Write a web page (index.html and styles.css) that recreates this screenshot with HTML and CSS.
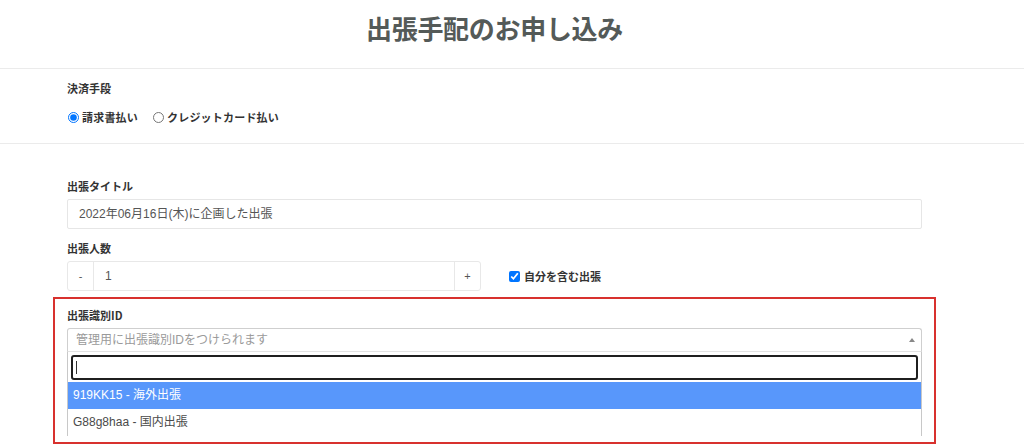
FILE: index.html
```html
<!DOCTYPE html>
<html lang="ja">
<head>
<meta charset="utf-8">
<title>出張手配のお申し込み</title>
<link rel="stylesheet" href="styles.css">
</head>
<body>
<header class="page-head">
  <div class="wrap">
    <h1 class="title">出張手配のお申し込み</h1>
  </div>
</header>

<section class="block pay">
  <div class="wrap">
    <div class="label">決済手段</div>
    <div class="radios">
      <label class="choice"><input type="radio" name="pay" checked><span>請求書払い</span></label>
      <label class="choice"><input type="radio" name="pay"><span>クレジットカード払い</span></label>
    </div>
  </div>
</section>

<section class="block main">
  <div class="wrap">
    <div class="label">出張タイトル</div>
    <div class="text-input">2022年06月16日(木)に企画した出張</div>

    <div class="label label-gap">出張人数</div>
    <div class="count-row">
      <div class="stepper">
        <div class="step-btn">-</div>
        <div class="step-val">1</div>
        <div class="step-btn">+</div>
      </div>
      <label class="check"><input type="checkbox" checked><span>自分を含む出張</span></label>
    </div>

    <div class="highlight">
      <div class="label">出張識別ID</div>
      <div class="select">
        <span class="placeholder">管理用に出張識別IDをつけられます</span>
        <span class="arrow"></span>
      </div>
      <div class="dropdown">
        <div class="search-wrap">
          <div class="search"><span class="caret"></span></div>
        </div>
        <div class="option active">919KK15 - 海外出張</div>
        <div class="option">G88g8haa - 国内出張</div>
      </div>
    </div>
  </div>
</section>
</body>
</html>
```

FILE: styles.css
```css
* { box-sizing: border-box; }

html, body {
  margin: 0;
  padding: 0;
  background: #fff;
  font-family: "Liberation Sans", "Noto Sans CJK JP", sans-serif;
  color: #333;
}

.wrap {
  width: 883px;
  margin-left: 53px;
  padding: 0 14px;
}

.page-head {
  height: 69px;
  border-bottom: 1px solid #ebebeb;
}

.title {
  margin: 0;
  padding-top: 13px;
  text-align: center;
  font-family: "Noto Sans CJK JP", sans-serif;
  font-size: 26px;
  line-height: 30px;
  font-weight: 700;
  color: #545a58;
  letter-spacing: -0.3px;
}

.block { border-bottom: 1px solid #ebebeb; }

.pay .wrap { padding-top: 11px; padding-bottom: 17px; }

.label {
  font-family: "Noto Sans CJK JP", sans-serif;
  font-size: 11px;
  line-height: 16px;
  font-weight: 700;
  color: #333;
}

.radios {
  display: flex;
  align-items: center;
  gap: 14px;
  margin-top: 12px;
  height: 18px;
}

.choice, .check {
  display: flex;
  align-items: center;
  font-family: "Noto Sans CJK JP", sans-serif;
  font-size: 11px;
  font-weight: 700;
  color: #333;
}

.choice input {
  width: 11px;
  height: 11px;
  margin: 0 3px 0 1px;
}

.choice span { letter-spacing: 0.2px; }

.main { border-bottom: none; }
.main .wrap { padding-top: 34px; }

.text-input {
  margin-top: 5px;
  height: 30px;
  border: 1px solid #e6e6e6;
  border-radius: 2px;
  padding: 0 11px;
  font-size: 12px;
  line-height: 28px;
  color: #555;
}

.label-gap { margin-top: 11px; }

.count-row {
  display: flex;
  align-items: center;
  margin-top: 5px;
}

.stepper {
  display: flex;
  width: 414px;
  height: 30px;
  border: 1px solid #e8e8e8;
  border-radius: 3px;
}

.step-btn {
  width: 25px;
  text-align: center;
  font-size: 11px;
  line-height: 28px;
  color: #555;
}

.step-val {
  flex: 1;
  border-left: 1px solid #e8e8e8;
  border-right: 1px solid #e8e8e8;
  padding-left: 11px;
  font-size: 12px;
  line-height: 28px;
  color: #555;
}

.check { margin-left: 26px; }
.check input {
  width: 11px;
  height: 11px;
  margin: 0 4px 0 2px;
}

.highlight {
  margin: 6px -14px 0;
  border: 2px solid #d8312e;
  padding: 8px 12px 6px;
}

.select {
  position: relative;
  margin-top: 5px;
  height: 24px;
  border: 1px solid #cfcfcf;
  border-bottom-color: #e2e2e2;
  border-radius: 3px 3px 0 0;
  padding: 0 8px;
  font-size: 12px;
  line-height: 22px;
}

.placeholder { color: #9a9a9a; }

.arrow {
  position: absolute;
  right: 6px;
  top: 9px;
  width: 0;
  height: 0;
  border-left: 3px solid transparent;
  border-right: 3px solid transparent;
  border-bottom: 4px solid #888;
}

.dropdown {
  border-left: 1px solid #c8c8c8;
  border-right: 1px solid #c8c8c8;
}

.search-wrap { padding: 3px 3px 2px; }

.search {
  height: 25px;
  border: 2px solid #1f1f1f;
  border-radius: 3px;
  padding: 4px 3px;
}

.caret {
  display: block;
  width: 1px;
  height: 13px;
  background: #333;
}

.option {
  height: 27px;
  padding-left: 5px;
  font-size: 12px;
  line-height: 27px;
  color: #4a4a4a;
}

.option.active {
  background: #5897fb;
  color: #fff;
}
```
